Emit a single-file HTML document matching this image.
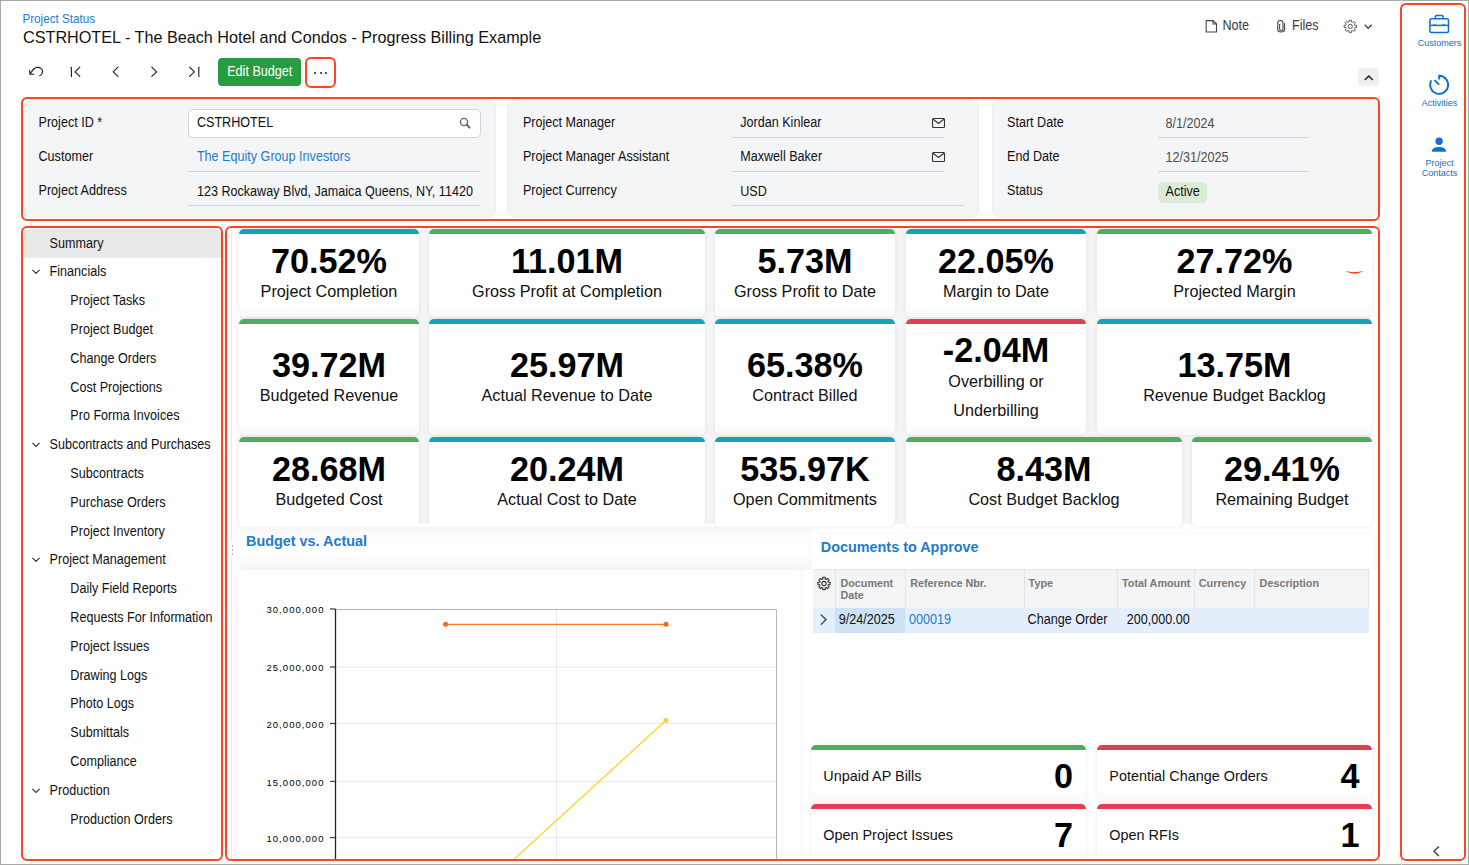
<!DOCTYPE html>
<html><head><meta charset="utf-8"><style>
html,body{margin:0;padding:0;width:1469px;height:865px;overflow:hidden;background:#fff;}
body{position:relative;font-family:"Liberation Sans",sans-serif;}
.t{position:absolute;white-space:nowrap;}
.r{position:absolute;}
svg.r{overflow:visible;}
</style></head><body>
<div class="r" style="left:0px;top:0px;width:1469px;height:865px;border:1px solid #a8a8a8;box-sizing:border-box;background:transparent;"></div>
<div class="t" style="left:22.40px;top:13px;font-size:11.7px;line-height:11.7px;color:#1c7bd0;font-weight:400;transform:scaleY(1.12);transform-origin:0 10px;">Project Status</div>
<div class="t" style="left:23.00px;top:29px;font-size:16.2px;line-height:16.2px;color:#111111;font-weight:400;">CSTRHOTEL - The Beach Hotel and Condos - Progress Billing Example</div>
<svg class="r" style="left:0;top:0" width="1469" height="100" viewBox="0 0 1469 100">
<g fill="none" stroke="#1e1e1e" stroke-width="1.15" stroke-linecap="round" stroke-linejoin="round">
<path d="M30.6 73.4 C32.5 69.8 35 67.4 37.6 67.4 C40.6 67.4 42.6 69.4 42.6 71.5 C42.6 73.2 41.6 74.6 39.8 75.8"/>
<path d="M29.6 70.3 L29.9 74.2 L33.8 74.3"/>
<path d="M71.4 67.2 V76.6"/><path d="M79.8 67.2 L75 71.8 L79.8 76.4"/>
<path d="M118 67.2 L113.2 71.8 L118 76.4"/>
<path d="M151.8 67.2 L156.6 71.8 L151.8 76.4"/>
<path d="M189.6 67.2 L194.4 71.8 L189.6 76.4"/><path d="M198.8 67.2 V76.6"/>
</g></svg>
<div class="r" style="left:218px;top:58px;width:83px;height:28px;background:#279c42;border-radius:4px;"></div>
<div class="t" style="left:227.20px;top:66px;font-size:12.6px;line-height:12.6px;color:#ffffff;font-weight:400;transform:scaleY(1.1);transform-origin:0 10px;">Edit Budget</div>
<div class="r" style="left:305px;top:57px;width:31px;height:31px;border:2px solid #fd4524;border-radius:6px;box-sizing:border-box;"></div>
<div class="r" style="left:314.2px;top:71.6px;width:2.0px;height:2.0px;background:#222;border-radius:1px;"></div>
<div class="r" style="left:319.6px;top:71.6px;width:2.0px;height:2.0px;background:#222;border-radius:1px;"></div>
<div class="r" style="left:325.0px;top:71.6px;width:2.0px;height:2.0px;background:#222;border-radius:1px;"></div>
<svg class="r" style="left:0;top:0" width="1469" height="100" viewBox="0 0 1469 100">
<g fill="none" stroke="#444" stroke-width="1.1" stroke-linejoin="round">
<path d="M1206.2 20.6 H1213 L1216.5 24 V32 H1206.2 Z"/><path d="M1213 20.6 V24 H1216.5"/>
<path d="M1284.6 23.3 V29.3 C1284.6 32.9 1277.7 32.9 1277.7 29.3 V22.9 C1277.7 19.6 1283 19.6 1283 22.9 V29 C1283 30.9 1279.6 30.9 1279.6 29 V24"/>
</g>
<path d="M1354.75 25.22 L1356.51 25.37 L1356.51 27.43 L1354.75 27.58 L1354.28 28.71 L1355.43 30.06 L1353.96 31.53 L1352.61 30.38 L1351.48 30.85 L1351.33 32.61 L1349.27 32.61 L1349.12 30.85 L1347.99 30.38 L1346.64 31.53 L1345.17 30.06 L1346.32 28.71 L1345.85 27.58 L1344.09 27.43 L1344.09 25.37 L1345.85 25.22 L1346.32 24.09 L1345.17 22.74 L1346.64 21.27 L1347.99 22.42 L1349.12 21.95 L1349.27 20.19 L1351.33 20.19 L1351.48 21.95 L1352.61 22.42 L1353.96 21.27 L1355.43 22.74 L1354.28 24.09 Z" fill="none" stroke="#555" stroke-width="1.0" stroke-linejoin="round"/><circle cx="1350.3" cy="26.4" r="2.1" fill="none" stroke="#555" stroke-width="1.0"/>
<path d="M1364.8 24.8 L1368.2 28.4 L1371.6 24.8" fill="none" stroke="#333" stroke-width="1.3"/>
</svg>
<div class="t" style="left:1222.40px;top:20px;font-size:12.6px;line-height:12.6px;color:#3a3a3a;font-weight:400;transform:scaleY(1.1);transform-origin:0 10px;">Note</div>
<div class="t" style="left:1292.00px;top:20px;font-size:12.6px;line-height:12.6px;color:#3a3a3a;font-weight:400;transform:scaleY(1.1);transform-origin:0 10px;">Files</div>
<div class="r" style="left:1358px;top:68px;width:21px;height:18px;background:#eef0f2;border-radius:4px;"></div>
<svg class="r" style="left:1358px;top:68px" width="21" height="18" viewBox="0 0 21 18"><path d="M6.8 12 L10.8 8 L14.8 12" fill="none" stroke="#222" stroke-width="1.5"/></svg>
<div class="r" style="left:21px;top:97px;width:1359px;height:124px;border:2px solid #fd4524;border-radius:6px;box-sizing:border-box;"></div>
<div class="r" style="left:23px;top:99px;width:472.5px;height:118.5px;background:#f4f5f7;border-radius:9px;box-shadow:0 0 0 1px #eceef1 inset;"></div>
<div class="r" style="left:507.3px;top:99px;width:472.2px;height:118.5px;background:#f4f5f7;border-radius:9px;box-shadow:0 0 0 1px #eceef1 inset;"></div>
<div class="r" style="left:991.5px;top:99px;width:386.5px;height:118.5px;background:#f4f5f7;border-radius:9px;box-shadow:0 0 0 1px #eceef1 inset;"></div>
<div class="t" style="left:38.50px;top:117px;font-size:12.6px;line-height:12.6px;color:#111111;font-weight:400;transform:scaleY(1.1);transform-origin:0 10px;">Project ID *</div>
<div class="t" style="left:38.50px;top:151px;font-size:12.6px;line-height:12.6px;color:#111111;font-weight:400;transform:scaleY(1.1);transform-origin:0 10px;">Customer</div>
<div class="t" style="left:38.50px;top:185px;font-size:12.6px;line-height:12.6px;color:#111111;font-weight:400;transform:scaleY(1.1);transform-origin:0 10px;">Project Address</div>
<div class="r" style="left:188px;top:109px;width:293px;height:29px;background:#fff;border:1px solid #d2d4d7;border-radius:5px;box-sizing:border-box;"></div>
<div class="t" style="left:196.90px;top:117px;font-size:12.6px;line-height:12.6px;color:#111111;font-weight:400;transform:scaleY(1.1);transform-origin:0 10px;">CSTRHOTEL</div>
<svg class="r" style="left:458px;top:116px" width="16" height="16" viewBox="0 0 16 16"><circle cx="6" cy="6" r="3.6" fill="none" stroke="#666" stroke-width="1.4"/><path d="M8.7 8.7 L11.6 11.6" stroke="#555" stroke-width="1.7" stroke-linecap="round"/></svg>
<div class="t" style="left:196.90px;top:151px;font-size:12.6px;line-height:12.6px;color:#1c7bd0;font-weight:400;transform:scaleY(1.1);transform-origin:0 10px;">The Equity Group Investors</div>
<div class="r" style="left:188.4px;top:171px;width:292.29999999999995px;height:1px;background:#d4d6d9;"></div>
<div class="t" style="left:196.90px;top:186px;font-size:12.6px;line-height:12.6px;color:#111111;font-weight:400;transform:scaleY(1.1);transform-origin:0 10px;">123 Rockaway Blvd, Jamaica Queens, NY, 11420</div>
<div class="r" style="left:188.4px;top:205px;width:292.29999999999995px;height:1px;background:#d4d6d9;"></div>
<div class="t" style="left:522.90px;top:117px;font-size:12.6px;line-height:12.6px;color:#111111;font-weight:400;transform:scaleY(1.1);transform-origin:0 10px;">Project Manager</div>
<div class="t" style="left:522.90px;top:151px;font-size:12.6px;line-height:12.6px;color:#111111;font-weight:400;transform:scaleY(1.1);transform-origin:0 10px;">Project Manager Assistant</div>
<div class="t" style="left:522.90px;top:185px;font-size:12.6px;line-height:12.6px;color:#111111;font-weight:400;transform:scaleY(1.1);transform-origin:0 10px;">Project Currency</div>
<div class="t" style="left:740.20px;top:117px;font-size:12.6px;line-height:12.6px;color:#111111;font-weight:400;transform:scaleY(1.1);transform-origin:0 10px;">Jordan Kinlear</div>
<div class="t" style="left:740.20px;top:151px;font-size:12.6px;line-height:12.6px;color:#111111;font-weight:400;transform:scaleY(1.1);transform-origin:0 10px;">Maxwell Baker</div>
<div class="t" style="left:740.20px;top:186px;font-size:12.6px;line-height:12.6px;color:#111111;font-weight:400;transform:scaleY(1.1);transform-origin:0 10px;">USD</div>
<div class="r" style="left:732px;top:137px;width:212.5px;height:1px;background:#d4d6d9;"></div>
<div class="r" style="left:732px;top:171px;width:212.5px;height:1px;background:#d4d6d9;"></div>
<div class="r" style="left:732px;top:205px;width:232px;height:1px;background:#d4d6d9;"></div>
<svg class="r" style="left:931px;top:116.8px" width="15" height="12" viewBox="0 0 15 12"><rect x="1.5" y="1.5" width="12" height="9" rx="1" fill="none" stroke="#333" stroke-width="1.1"/><path d="M1.8 2 L7.5 6.5 L13.2 2" fill="none" stroke="#333" stroke-width="1.1"/></svg>
<svg class="r" style="left:931px;top:150.8px" width="15" height="12" viewBox="0 0 15 12"><rect x="1.5" y="1.5" width="12" height="9" rx="1" fill="none" stroke="#333" stroke-width="1.1"/><path d="M1.8 2 L7.5 6.5 L13.2 2" fill="none" stroke="#333" stroke-width="1.1"/></svg>
<div class="t" style="left:1007.00px;top:117px;font-size:12.6px;line-height:12.6px;color:#111111;font-weight:400;transform:scaleY(1.1);transform-origin:0 10px;">Start Date</div>
<div class="t" style="left:1007.00px;top:151px;font-size:12.6px;line-height:12.6px;color:#111111;font-weight:400;transform:scaleY(1.1);transform-origin:0 10px;">End Date</div>
<div class="t" style="left:1007.00px;top:185px;font-size:12.6px;line-height:12.6px;color:#111111;font-weight:400;transform:scaleY(1.1);transform-origin:0 10px;">Status</div>
<div class="t" style="left:1165.50px;top:118px;font-size:12.6px;line-height:12.6px;color:#4d4d4d;font-weight:400;transform:scaleY(1.1);transform-origin:0 10px;">8/1/2024</div>
<div class="t" style="left:1165.50px;top:152px;font-size:12.6px;line-height:12.6px;color:#4d4d4d;font-weight:400;transform:scaleY(1.1);transform-origin:0 10px;">12/31/2025</div>
<div class="r" style="left:1157.5px;top:137px;width:151.79999999999995px;height:1px;background:#d4d6d9;"></div>
<div class="r" style="left:1157.5px;top:171px;width:151.79999999999995px;height:1px;background:#d4d6d9;"></div>
<div class="r" style="left:1158.2px;top:182.1px;width:48.5px;height:20.5px;background:#dcebd5;border-radius:5px;"></div>
<div class="t" style="left:1165.50px;top:186px;font-size:12.6px;line-height:12.6px;color:#111111;font-weight:400;transform:scaleY(1.1);transform-origin:0 10px;">Active</div>
<div class="r" style="left:21px;top:226px;width:202px;height:635px;border:2px solid #fd4524;border-radius:6px;box-sizing:border-box;"></div>
<div class="r" style="left:23px;top:228.5px;width:197.5px;height:29.5px;background:#e9e9e9;border-radius:5px 5px 0 0;"></div>
<div class="t" style="left:49.60px;top:238px;font-size:12.6px;line-height:12.6px;color:#111111;font-weight:400;transform:scaleY(1.1);transform-origin:0 10px;">Summary</div>
<div class="t" style="left:49.60px;top:266px;font-size:12.6px;line-height:12.6px;color:#111111;font-weight:400;transform:scaleY(1.1);transform-origin:0 10px;">Financials</div>
<div class="t" style="left:70.30px;top:295px;font-size:12.6px;line-height:12.6px;color:#111111;font-weight:400;transform:scaleY(1.1);transform-origin:0 10px;">Project Tasks</div>
<div class="t" style="left:70.30px;top:324px;font-size:12.6px;line-height:12.6px;color:#111111;font-weight:400;transform:scaleY(1.1);transform-origin:0 10px;">Project Budget</div>
<div class="t" style="left:70.30px;top:353px;font-size:12.6px;line-height:12.6px;color:#111111;font-weight:400;transform:scaleY(1.1);transform-origin:0 10px;">Change Orders</div>
<div class="t" style="left:70.30px;top:382px;font-size:12.6px;line-height:12.6px;color:#111111;font-weight:400;transform:scaleY(1.1);transform-origin:0 10px;">Cost Projections</div>
<div class="t" style="left:70.30px;top:410px;font-size:12.6px;line-height:12.6px;color:#111111;font-weight:400;transform:scaleY(1.1);transform-origin:0 10px;">Pro Forma Invoices</div>
<div class="t" style="left:49.60px;top:439px;font-size:12.6px;line-height:12.6px;color:#111111;font-weight:400;transform:scaleY(1.1);transform-origin:0 10px;">Subcontracts and Purchases</div>
<div class="t" style="left:70.30px;top:468px;font-size:12.6px;line-height:12.6px;color:#111111;font-weight:400;transform:scaleY(1.1);transform-origin:0 10px;">Subcontracts</div>
<div class="t" style="left:70.30px;top:497px;font-size:12.6px;line-height:12.6px;color:#111111;font-weight:400;transform:scaleY(1.1);transform-origin:0 10px;">Purchase Orders</div>
<div class="t" style="left:70.30px;top:526px;font-size:12.6px;line-height:12.6px;color:#111111;font-weight:400;transform:scaleY(1.1);transform-origin:0 10px;">Project Inventory</div>
<div class="t" style="left:49.60px;top:554px;font-size:12.6px;line-height:12.6px;color:#111111;font-weight:400;transform:scaleY(1.1);transform-origin:0 10px;">Project Management</div>
<div class="t" style="left:70.30px;top:583px;font-size:12.6px;line-height:12.6px;color:#111111;font-weight:400;transform:scaleY(1.1);transform-origin:0 10px;">Daily Field Reports</div>
<div class="t" style="left:70.30px;top:612px;font-size:12.6px;line-height:12.6px;color:#111111;font-weight:400;transform:scaleY(1.1);transform-origin:0 10px;">Requests For Information</div>
<div class="t" style="left:70.30px;top:641px;font-size:12.6px;line-height:12.6px;color:#111111;font-weight:400;transform:scaleY(1.1);transform-origin:0 10px;">Project Issues</div>
<div class="t" style="left:70.30px;top:670px;font-size:12.6px;line-height:12.6px;color:#111111;font-weight:400;transform:scaleY(1.1);transform-origin:0 10px;">Drawing Logs</div>
<div class="t" style="left:70.30px;top:698px;font-size:12.6px;line-height:12.6px;color:#111111;font-weight:400;transform:scaleY(1.1);transform-origin:0 10px;">Photo Logs</div>
<div class="t" style="left:70.30px;top:727px;font-size:12.6px;line-height:12.6px;color:#111111;font-weight:400;transform:scaleY(1.1);transform-origin:0 10px;">Submittals</div>
<div class="t" style="left:70.30px;top:756px;font-size:12.6px;line-height:12.6px;color:#111111;font-weight:400;transform:scaleY(1.1);transform-origin:0 10px;">Compliance</div>
<div class="t" style="left:49.60px;top:785px;font-size:12.6px;line-height:12.6px;color:#111111;font-weight:400;transform:scaleY(1.1);transform-origin:0 10px;">Production</div>
<div class="t" style="left:70.30px;top:814px;font-size:12.6px;line-height:12.6px;color:#111111;font-weight:400;transform:scaleY(1.1);transform-origin:0 10px;">Production Orders</div>
<svg class="r" style="left:0;top:0" width="240" height="865" viewBox="0 0 240 865"><g fill="none" stroke="#333" stroke-width="1.2"><path d="M32.4 269.80 L36 273.40 L39.6 269.80"/><path d="M32.4 442.80 L36 446.40 L39.6 442.80"/><path d="M32.4 557.80 L36 561.40 L39.6 557.80"/><path d="M32.4 788.80 L36 792.40 L39.6 788.80"/></g></svg>
<div class="r" style="left:0;top:0;width:1469px;height:859px;overflow:hidden">
<div class="r" style="left:231px;top:228px;width:1px;height:631px;background:#ececec;"></div>
<div class="r" style="left:227px;top:540px;width:9px;height:18px;background:#fff;"></div>
<div class="r" style="left:231.5px;top:545px;width:1.5px;height:1.5px;background:#bbb;"></div>
<div class="r" style="left:231.5px;top:549px;width:1.5px;height:1.5px;background:#bbb;"></div>
<div class="r" style="left:231.5px;top:553px;width:1.5px;height:1.5px;background:#bbb;"></div>
<div class="r" style="left:240px;top:230px;width:1131px;height:294px;background:#f5f5f5;"></div>
<div class="r" style="left:239px;top:229px;width:180px;height:88px;background:linear-gradient(to bottom,#fff 0,#fff calc(100% - 14px),#f8f8f8 100%);border-radius:6px;box-shadow:0 0 5px rgba(0,0,0,0.08);"></div>
<div class="r" style="left:239px;top:229px;width:180px;height:5px;background:#17a2b8;border-radius:6px 6px 0 0;"></div>
<div class="r" style="left:429px;top:229px;width:276px;height:88px;background:linear-gradient(to bottom,#fff 0,#fff calc(100% - 14px),#f8f8f8 100%);border-radius:6px;box-shadow:0 0 5px rgba(0,0,0,0.08);"></div>
<div class="r" style="left:429px;top:229px;width:276px;height:5px;background:#4cad64;border-radius:6px 6px 0 0;"></div>
<div class="r" style="left:715px;top:229px;width:180px;height:88px;background:linear-gradient(to bottom,#fff 0,#fff calc(100% - 14px),#f8f8f8 100%);border-radius:6px;box-shadow:0 0 5px rgba(0,0,0,0.08);"></div>
<div class="r" style="left:715px;top:229px;width:180px;height:5px;background:#4cad64;border-radius:6px 6px 0 0;"></div>
<div class="r" style="left:906px;top:229px;width:180px;height:88px;background:linear-gradient(to bottom,#fff 0,#fff calc(100% - 14px),#f8f8f8 100%);border-radius:6px;box-shadow:0 0 5px rgba(0,0,0,0.08);"></div>
<div class="r" style="left:906px;top:229px;width:180px;height:5px;background:#17a2b8;border-radius:6px 6px 0 0;"></div>
<div class="r" style="left:1097px;top:229px;width:275px;height:88px;background:linear-gradient(to bottom,#fff 0,#fff calc(100% - 14px),#f8f8f8 100%);border-radius:6px;box-shadow:0 0 5px rgba(0,0,0,0.08);"></div>
<div class="r" style="left:1097px;top:229px;width:275px;height:5px;background:#4cad64;border-radius:6px 6px 0 0;"></div>
<div class="r" style="left:239px;top:319px;width:180px;height:116px;background:linear-gradient(to bottom,#fff 0,#fff calc(100% - 14px),#f8f8f8 100%);border-radius:6px;box-shadow:0 0 5px rgba(0,0,0,0.08);"></div>
<div class="r" style="left:239px;top:319px;width:180px;height:5px;background:#4cad64;border-radius:6px 6px 0 0;"></div>
<div class="r" style="left:429px;top:319px;width:276px;height:116px;background:linear-gradient(to bottom,#fff 0,#fff calc(100% - 14px),#f8f8f8 100%);border-radius:6px;box-shadow:0 0 5px rgba(0,0,0,0.08);"></div>
<div class="r" style="left:429px;top:319px;width:276px;height:5px;background:#17a2b8;border-radius:6px 6px 0 0;"></div>
<div class="r" style="left:715px;top:319px;width:180px;height:116px;background:linear-gradient(to bottom,#fff 0,#fff calc(100% - 14px),#f8f8f8 100%);border-radius:6px;box-shadow:0 0 5px rgba(0,0,0,0.08);"></div>
<div class="r" style="left:715px;top:319px;width:180px;height:5px;background:#17a2b8;border-radius:6px 6px 0 0;"></div>
<div class="r" style="left:906px;top:319px;width:180px;height:116px;background:linear-gradient(to bottom,#fff 0,#fff calc(100% - 14px),#f8f8f8 100%);border-radius:6px;box-shadow:0 0 5px rgba(0,0,0,0.08);"></div>
<div class="r" style="left:906px;top:319px;width:180px;height:5px;background:#e03e52;border-radius:6px 6px 0 0;"></div>
<div class="r" style="left:1097px;top:319px;width:275px;height:116px;background:linear-gradient(to bottom,#fff 0,#fff calc(100% - 14px),#f8f8f8 100%);border-radius:6px;box-shadow:0 0 5px rgba(0,0,0,0.08);"></div>
<div class="r" style="left:1097px;top:319px;width:275px;height:5px;background:#17a2b8;border-radius:6px 6px 0 0;"></div>
<div class="r" style="left:239px;top:437px;width:180px;height:90px;background:#fff;border-radius:6px;box-shadow:0 0 5px rgba(0,0,0,0.08);"></div>
<div class="r" style="left:239px;top:437px;width:180px;height:5px;background:#4cad64;border-radius:6px 6px 0 0;"></div>
<div class="r" style="left:429px;top:437px;width:276px;height:90px;background:#fff;border-radius:6px;box-shadow:0 0 5px rgba(0,0,0,0.08);"></div>
<div class="r" style="left:429px;top:437px;width:276px;height:5px;background:#17a2b8;border-radius:6px 6px 0 0;"></div>
<div class="r" style="left:715px;top:437px;width:180px;height:90px;background:#fff;border-radius:6px;box-shadow:0 0 5px rgba(0,0,0,0.08);"></div>
<div class="r" style="left:715px;top:437px;width:180px;height:5px;background:#17a2b8;border-radius:6px 6px 0 0;"></div>
<div class="r" style="left:906px;top:437px;width:276px;height:90px;background:#fff;border-radius:6px;box-shadow:0 0 5px rgba(0,0,0,0.08);"></div>
<div class="r" style="left:906px;top:437px;width:276px;height:5px;background:#4cad64;border-radius:6px 6px 0 0;"></div>
<div class="r" style="left:1192px;top:437px;width:180px;height:90px;background:#fff;border-radius:6px;box-shadow:0 0 5px rgba(0,0,0,0.08);"></div>
<div class="r" style="left:1192px;top:437px;width:180px;height:5px;background:#4cad64;border-radius:6px 6px 0 0;"></div>
<div class="t" style="left:-171.00px;width:1000px;text-align:center;top:244px;font-size:34.2px;line-height:34.2px;color:#000;font-weight:700;transform:scaleY(1.045);transform-origin:50% 29px;">70.52%</div>
<div class="t" style="left:-171.00px;width:1000px;text-align:center;top:283px;font-size:16.2px;line-height:16.2px;color:#111111;font-weight:400;">Project Completion</div>
<div class="t" style="left:67.00px;width:1000px;text-align:center;top:244px;font-size:34.2px;line-height:34.2px;color:#000;font-weight:700;transform:scaleY(1.045);transform-origin:50% 29px;">11.01M</div>
<div class="t" style="left:67.00px;width:1000px;text-align:center;top:283px;font-size:16.2px;line-height:16.2px;color:#111111;font-weight:400;">Gross Profit at Completion</div>
<div class="t" style="left:305.00px;width:1000px;text-align:center;top:244px;font-size:34.2px;line-height:34.2px;color:#000;font-weight:700;transform:scaleY(1.045);transform-origin:50% 29px;">5.73M</div>
<div class="t" style="left:305.00px;width:1000px;text-align:center;top:283px;font-size:16.2px;line-height:16.2px;color:#111111;font-weight:400;">Gross Profit to Date</div>
<div class="t" style="left:496.00px;width:1000px;text-align:center;top:244px;font-size:34.2px;line-height:34.2px;color:#000;font-weight:700;transform:scaleY(1.045);transform-origin:50% 29px;">22.05%</div>
<div class="t" style="left:496.00px;width:1000px;text-align:center;top:283px;font-size:16.2px;line-height:16.2px;color:#111111;font-weight:400;">Margin to Date</div>
<div class="t" style="left:734.50px;width:1000px;text-align:center;top:244px;font-size:34.2px;line-height:34.2px;color:#000;font-weight:700;transform:scaleY(1.045);transform-origin:50% 29px;">27.72%</div>
<div class="t" style="left:734.50px;width:1000px;text-align:center;top:283px;font-size:16.2px;line-height:16.2px;color:#111111;font-weight:400;">Projected Margin</div>
<div class="t" style="left:-171.00px;width:1000px;text-align:center;top:348px;font-size:34.2px;line-height:34.2px;color:#000;font-weight:700;transform:scaleY(1.045);transform-origin:50% 29px;">39.72M</div>
<div class="t" style="left:-171.00px;width:1000px;text-align:center;top:387px;font-size:16.2px;line-height:16.2px;color:#111111;font-weight:400;">Budgeted Revenue</div>
<div class="t" style="left:67.00px;width:1000px;text-align:center;top:348px;font-size:34.2px;line-height:34.2px;color:#000;font-weight:700;transform:scaleY(1.045);transform-origin:50% 29px;">25.97M</div>
<div class="t" style="left:67.00px;width:1000px;text-align:center;top:387px;font-size:16.2px;line-height:16.2px;color:#111111;font-weight:400;">Actual Revenue to Date</div>
<div class="t" style="left:305.00px;width:1000px;text-align:center;top:348px;font-size:34.2px;line-height:34.2px;color:#000;font-weight:700;transform:scaleY(1.045);transform-origin:50% 29px;">65.38%</div>
<div class="t" style="left:305.00px;width:1000px;text-align:center;top:387px;font-size:16.2px;line-height:16.2px;color:#111111;font-weight:400;">Contract Billed</div>
<div class="t" style="left:496.00px;width:1000px;text-align:center;top:333px;font-size:34.2px;line-height:34.2px;color:#000;font-weight:700;transform:scaleY(1.045);transform-origin:50% 29px;">-2.04M</div>
<div class="t" style="left:496.00px;width:1000px;text-align:center;top:373px;font-size:16.2px;line-height:16.2px;color:#111111;font-weight:400;">Overbilling or</div>
<div class="t" style="left:496.00px;width:1000px;text-align:center;top:402px;font-size:16.2px;line-height:16.2px;color:#111111;font-weight:400;">Underbilling</div>
<div class="t" style="left:734.50px;width:1000px;text-align:center;top:348px;font-size:34.2px;line-height:34.2px;color:#000;font-weight:700;transform:scaleY(1.045);transform-origin:50% 29px;">13.75M</div>
<div class="t" style="left:734.50px;width:1000px;text-align:center;top:387px;font-size:16.2px;line-height:16.2px;color:#111111;font-weight:400;">Revenue Budget Backlog</div>
<div class="t" style="left:-171.00px;width:1000px;text-align:center;top:452px;font-size:34.2px;line-height:34.2px;color:#000;font-weight:700;transform:scaleY(1.045);transform-origin:50% 29px;">28.68M</div>
<div class="t" style="left:-171.00px;width:1000px;text-align:center;top:491px;font-size:16.2px;line-height:16.2px;color:#111111;font-weight:400;">Budgeted Cost</div>
<div class="t" style="left:67.00px;width:1000px;text-align:center;top:452px;font-size:34.2px;line-height:34.2px;color:#000;font-weight:700;transform:scaleY(1.045);transform-origin:50% 29px;">20.24M</div>
<div class="t" style="left:67.00px;width:1000px;text-align:center;top:491px;font-size:16.2px;line-height:16.2px;color:#111111;font-weight:400;">Actual Cost to Date</div>
<div class="t" style="left:305.00px;width:1000px;text-align:center;top:452px;font-size:34.2px;line-height:34.2px;color:#000;font-weight:700;transform:scaleY(1.045);transform-origin:50% 29px;">535.97K</div>
<div class="t" style="left:305.00px;width:1000px;text-align:center;top:491px;font-size:16.2px;line-height:16.2px;color:#111111;font-weight:400;">Open Commitments</div>
<div class="t" style="left:544.00px;width:1000px;text-align:center;top:452px;font-size:34.2px;line-height:34.2px;color:#000;font-weight:700;transform:scaleY(1.045);transform-origin:50% 29px;">8.43M</div>
<div class="t" style="left:544.00px;width:1000px;text-align:center;top:491px;font-size:16.2px;line-height:16.2px;color:#111111;font-weight:400;">Cost Budget Backlog</div>
<div class="t" style="left:782.00px;width:1000px;text-align:center;top:452px;font-size:34.2px;line-height:34.2px;color:#000;font-weight:700;transform:scaleY(1.045);transform-origin:50% 29px;">29.41%</div>
<div class="t" style="left:782.00px;width:1000px;text-align:center;top:491px;font-size:16.2px;line-height:16.2px;color:#111111;font-weight:400;">Remaining Budget</div>
<svg class="r" style="left:0;top:0" width="1469" height="865" viewBox="0 0 1469 865"><path d="M1344.5 270.8 Q1354.5 276.5 1364.5 270.8 Q1354.5 273.2 1344.5 270.8 Z" fill="#f04a2a"/></svg>
<div class="r" style="left:239px;top:527px;width:573px;height:43px;background:linear-gradient(to bottom,#f6f6f6 0,#fff 13px,#fff 27px,#f7f7f7 100%);"></div>
<div class="t" style="left:246.00px;top:534px;font-size:14.4px;line-height:14.4px;color:#1c7bd0;font-weight:700;">Budget vs. Actual</div>
<div class="r" style="left:239px;top:570px;width:561px;height:300px;background:#fff;border-radius:6px;box-shadow:0 0 6px rgba(0,0,0,0.06);"></div>
<svg class="r" style="left:0;top:0" width="1469" height="865" viewBox="0 0 1469 865"><path d="M335.5 667 H776" stroke="#e9e9e9" stroke-width="1"/><path d="M335.5 723.5 H776" stroke="#e9e9e9" stroke-width="1"/><path d="M335.5 781.4 H776" stroke="#e9e9e9" stroke-width="1"/><path d="M335.5 837.6 H776" stroke="#e9e9e9" stroke-width="1"/><path d="M556.5 609 V865" stroke="#e9e9e9" stroke-width="1"/><path d="M335.5 609.5 H776.5 V865" fill="none" stroke="#b5b5b5" stroke-width="1"/><path d="M335.5 609 V865" stroke="#222" stroke-width="1.3"/><path d="M330 609 H335.5" stroke="#444" stroke-width="1.3"/><path d="M330 667 H335.5" stroke="#444" stroke-width="1.3"/><path d="M330 723.5 H335.5" stroke="#444" stroke-width="1.3"/><path d="M330 781.4 H335.5" stroke="#444" stroke-width="1.3"/><path d="M330 837.6 H335.5" stroke="#444" stroke-width="1.3"/><path d="M445.6 624.3 H666" stroke="#f5781e" stroke-width="1.3"/><circle cx="445.6" cy="624.3" r="2.5" fill="#f56a0e"/><circle cx="666" cy="624.3" r="2.5" fill="#f56a0e"/><path d="M666 720.3 L510 863" stroke="#fcd535" stroke-width="1.4"/><circle cx="666" cy="720.3" r="2.5" fill="#fcd02c"/></svg>
<div class="t" style="right:1144.50px;top:605px;font-size:9.5px;line-height:9.5px;color:#000;font-weight:400;letter-spacing:1.05px;">30,000,000</div>
<div class="t" style="right:1144.50px;top:663px;font-size:9.5px;line-height:9.5px;color:#000;font-weight:400;letter-spacing:1.05px;">25,000,000</div>
<div class="t" style="right:1144.50px;top:720px;font-size:9.5px;line-height:9.5px;color:#000;font-weight:400;letter-spacing:1.05px;">20,000,000</div>
<div class="t" style="right:1144.50px;top:778px;font-size:9.5px;line-height:9.5px;color:#000;font-weight:400;letter-spacing:1.05px;">15,000,000</div>
<div class="t" style="right:1144.50px;top:834px;font-size:9.5px;line-height:9.5px;color:#000;font-weight:400;letter-spacing:1.05px;">10,000,000</div>
<div class="r" style="left:812px;top:535px;width:562px;height:35px;background:#fff;box-shadow:0 0 6px rgba(0,0,0,0.04);"></div>
<div class="t" style="left:820.80px;top:540px;font-size:14.4px;line-height:14.4px;color:#1c7bd0;font-weight:700;">Documents to Approve</div>
<div class="r" style="left:813px;top:569px;width:556px;height:40px;background:#f3f4f6;border:1px solid #e2e4e7;border-left:none;box-sizing:border-box;"></div>
<div class="r" style="left:813px;top:608px;width:556px;height:25px;background:#e3effa;"></div>
<div class="r" style="left:835px;top:608px;width:70px;height:25px;background:#cde3f5;"></div>
<div class="r" style="left:835px;top:569px;width:1px;height:39px;background:#e2e4e7;"></div>
<div class="r" style="left:905px;top:569px;width:1px;height:39px;background:#e2e4e7;"></div>
<div class="r" style="left:1024px;top:569px;width:1px;height:39px;background:#e2e4e7;"></div>
<div class="r" style="left:1117px;top:569px;width:1px;height:39px;background:#e2e4e7;"></div>
<div class="r" style="left:1194px;top:569px;width:1px;height:39px;background:#e2e4e7;"></div>
<div class="r" style="left:1254px;top:569px;width:1px;height:39px;background:#e2e4e7;"></div>
<div class="t" style="left:840.40px;top:578px;font-size:10.8px;line-height:10.8px;color:#787878;font-weight:700;">Document</div>
<div class="t" style="left:840.40px;top:590px;font-size:10.8px;line-height:10.8px;color:#787878;font-weight:700;">Date</div>
<div class="t" style="left:910.20px;top:578px;font-size:10.8px;line-height:10.8px;color:#787878;font-weight:700;">Reference Nbr.</div>
<div class="t" style="left:1028.60px;top:578px;font-size:10.8px;line-height:10.8px;color:#787878;font-weight:700;">Type</div>
<div class="t" style="left:1122.00px;top:578px;font-size:10.8px;line-height:10.8px;color:#787878;font-weight:700;">Total Amount</div>
<div class="t" style="left:1198.80px;top:578px;font-size:10.8px;line-height:10.8px;color:#787878;font-weight:700;">Currency</div>
<div class="t" style="left:1259.60px;top:578px;font-size:10.8px;line-height:10.8px;color:#787878;font-weight:700;">Description</div>
<svg class="r" style="left:0;top:0" width="1469" height="865" viewBox="0 0 1469 865"><path d="M828.31 582.21 L830.08 582.29 L830.08 584.71 L828.31 584.79 L827.96 585.64 L829.16 586.94 L827.44 588.66 L826.14 587.46 L825.29 587.81 L825.21 589.58 L822.79 589.58 L822.71 587.81 L821.86 587.46 L820.56 588.66 L818.84 586.94 L820.04 585.64 L819.69 584.79 L817.92 584.71 L817.92 582.29 L819.69 582.21 L820.04 581.36 L818.84 580.06 L820.56 578.34 L821.86 579.54 L822.71 579.19 L822.79 577.42 L825.21 577.42 L825.29 579.19 L826.14 579.54 L827.44 578.34 L829.16 580.06 L827.96 581.36 Z" fill="none" stroke="#333" stroke-width="1.1" stroke-linejoin="round"/><circle cx="824" cy="583.5" r="2.1" fill="none" stroke="#333" stroke-width="1.1"/></svg>
<svg class="r" style="left:818px;top:612px" width="12" height="15" viewBox="0 0 12 15"><path d="M2.8 2.5 L8 7.6 L2.8 12.7" fill="none" stroke="#555" stroke-width="1.5"/></svg>
<div class="t" style="left:838.80px;top:614px;font-size:12.6px;line-height:12.6px;color:#111111;font-weight:400;transform:scaleY(1.1);transform-origin:0 10px;">9/24/2025</div>
<div class="t" style="left:909.00px;top:614px;font-size:12.6px;line-height:12.6px;color:#1c7bd0;font-weight:400;transform:scaleY(1.1);transform-origin:0 10px;">000019</div>
<div class="t" style="left:1027.60px;top:614px;font-size:12.6px;line-height:12.6px;color:#111111;font-weight:400;transform:scaleY(1.1);transform-origin:0 10px;">Change Order</div>
<div class="t" style="right:279.20px;top:614px;font-size:12.6px;line-height:12.6px;color:#111111;font-weight:400;transform:scaleY(1.1);transform-origin:100% 10px;">200,000.00</div>
<div class="r" style="left:811px;top:745px;width:274.5px;height:57.5px;background:linear-gradient(to bottom,#fff 0,#fff calc(100% - 14px),#f8f8f8 100%);border-radius:6px;box-shadow:0 0 5px rgba(0,0,0,0.08);"></div>
<div class="r" style="left:811px;top:745px;width:274.5px;height:5px;background:#4cad64;border-radius:6px 6px 0 0;"></div>
<div class="r" style="left:1097px;top:745px;width:275px;height:57.5px;background:linear-gradient(to bottom,#fff 0,#fff calc(100% - 14px),#f8f8f8 100%);border-radius:6px;box-shadow:0 0 5px rgba(0,0,0,0.08);"></div>
<div class="r" style="left:1097px;top:745px;width:275px;height:5px;background:#e03e52;border-radius:6px 6px 0 0;"></div>
<div class="r" style="left:811px;top:804px;width:274.5px;height:66px;background:linear-gradient(to bottom,#fff 0,#fff calc(100% - 14px),#f8f8f8 100%);border-radius:6px;box-shadow:0 0 5px rgba(0,0,0,0.08);"></div>
<div class="r" style="left:811px;top:804px;width:274.5px;height:5px;background:#e03e52;border-radius:6px 6px 0 0;"></div>
<div class="r" style="left:1097px;top:804px;width:275px;height:66px;background:linear-gradient(to bottom,#fff 0,#fff calc(100% - 14px),#f8f8f8 100%);border-radius:6px;box-shadow:0 0 5px rgba(0,0,0,0.08);"></div>
<div class="r" style="left:1097px;top:804px;width:275px;height:5px;background:#e03e52;border-radius:6px 6px 0 0;"></div>
<div class="t" style="left:823.30px;top:769px;font-size:14.4px;line-height:14.4px;color:#111111;font-weight:400;">Unpaid AP Bills</div>
<div class="t" style="right:396.10px;top:759px;font-size:34.2px;line-height:34.2px;color:#000;font-weight:700;transform:scaleY(1.045);transform-origin:100% 29px;">0</div>
<div class="t" style="left:1109.30px;top:769px;font-size:14.4px;line-height:14.4px;color:#111111;font-weight:400;">Potential Change Orders</div>
<div class="t" style="right:109.60px;top:759px;font-size:34.2px;line-height:34.2px;color:#000;font-weight:700;transform:scaleY(1.045);transform-origin:100% 29px;">4</div>
<div class="t" style="left:823.30px;top:828px;font-size:14.4px;line-height:14.4px;color:#111111;font-weight:400;">Open Project Issues</div>
<div class="t" style="right:396.10px;top:818px;font-size:34.2px;line-height:34.2px;color:#000;font-weight:700;transform:scaleY(1.045);transform-origin:100% 29px;">7</div>
<div class="t" style="left:1109.30px;top:828px;font-size:14.4px;line-height:14.4px;color:#111111;font-weight:400;">Open RFIs</div>
<div class="t" style="right:109.60px;top:818px;font-size:34.2px;line-height:34.2px;color:#000;font-weight:700;transform:scaleY(1.045);transform-origin:100% 29px;">1</div>
</div>
<div class="r" style="left:225px;top:226px;width:1155px;height:635px;border:2px solid #fd4524;border-radius:6px;box-sizing:border-box;"></div>
<div class="r" style="left:1401px;top:0px;width:1px;height:865px;background:#dcdcdc;"></div>
<div class="r" style="left:1400px;top:3px;width:66px;height:858px;border:2px solid #fd4524;border-radius:6px;box-sizing:border-box;"></div>
<svg class="r" style="left:1400px;top:0" width="66" height="200" viewBox="0 0 66 200">
<g fill="none" stroke="#0e70cf" stroke-width="1.5">
<rect x="29.9" y="18.8" width="18.6" height="13.8" rx="1.5"/>
<path d="M35.4 18.8 V16.4 Q35.4 15.4 36.4 15.4 H42 Q43 15.4 43 16.4 V18.8"/>
<path d="M29.9 25.4 H48.5"/>
<path d="M39.2 79.6 V75.8 A9 9 0 1 1 31.3 80.4" stroke-width="1.9" stroke-linecap="butt"/>
</g>
<path d="M33.5 24.3 h2.2 v1.4 h-2.2z M42.6 24.3 h2.2 v1.4 h-2.2z" fill="#0e70cf"/>
<path d="M34.4 80.1 L39.2 84.6" stroke="#0e70cf" stroke-width="1.8"/>
<circle cx="39.1" cy="141.3" r="3.7" fill="#0e70cf"/>
<path d="M31.8 151.8 Q31.8 147 39 147 Q46.2 147 46.2 151.8 Z" fill="#0e70cf"/>
<path d="M39 846.5 L34 851.2 L39 856" fill="none" stroke="#555" stroke-width="1.2"/>
</svg>
<svg class="r" style="left:1400px;top:820px" width="66" height="45" viewBox="0 820 66 45"><path d="M38.8 846.5 L34 851.2 L38.8 856" fill="none" stroke="#555" stroke-width="1.2"/></svg>
<div class="t" style="left:939.50px;width:1000px;text-align:center;top:39px;font-size:9.0px;line-height:9.0px;color:#0e70cf;font-weight:400;">Customers</div>
<div class="t" style="left:939.50px;width:1000px;text-align:center;top:99px;font-size:9.0px;line-height:9.0px;color:#0e70cf;font-weight:400;">Activities</div>
<div class="t" style="left:939.50px;width:1000px;text-align:center;top:159px;font-size:9.0px;line-height:9.0px;color:#0e70cf;font-weight:400;">Project</div>
<div class="t" style="left:939.50px;width:1000px;text-align:center;top:169px;font-size:9.0px;line-height:9.0px;color:#0e70cf;font-weight:400;">Contacts</div>
</body></html>
